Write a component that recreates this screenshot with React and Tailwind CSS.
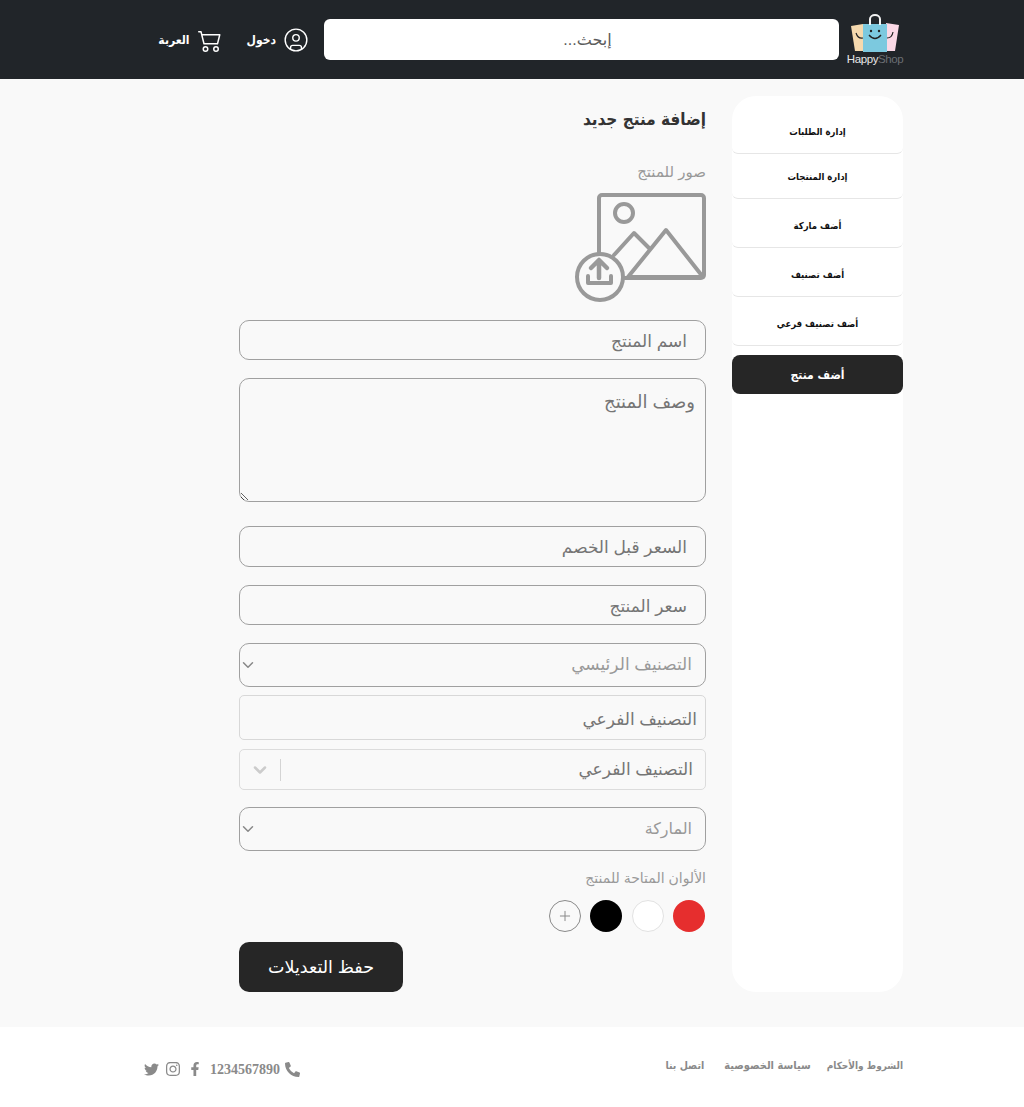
import { CircleUser, ChevronDown, Plus } from 'lucide-react';
import { BsCart2 } from 'react-icons/bs';
import { FaTwitter, FaInstagram, FaFacebookF, FaPhoneAlt } from 'react-icons/fa';

const navItems = [
  { label: 'إدارة الطلبات', cls: 'h-[44px] mb-px' },
  { label: 'إدارة المنتجات', cls: 'h-[44px] mb-[5px]' },
  { label: 'أضف ماركة', cls: 'h-[44px] mb-[5px]' },
  { label: 'أضف تصنيف', cls: 'h-[44px] mb-[5px]' },
  { label: 'أضف تصنيف فرعي', cls: 'h-[44px] mb-[9px]' },
];

const inputCls =
  'block w-full border border-[#a0a0a0] rounded-[10px] bg-transparent text-[17px] px-[18px] pt-[3px] placeholder:text-[#757575] outline-none';

const condensed = "font-['DejaVu_Sans_Condensed','Liberation_Sans',sans-serif]";

function Logo() {
  return (
    <div className="w-[56px] h-[52px] flex flex-col items-center shrink-0">
      <svg width="50" height="38" viewBox="0 0 50 38">
        <path d="M1 12 L13 10 V37 H5 Z" fill="#f5d9ae" />
        <path d="M36 9 L49 11 L45 37 H36 Z" fill="#fbd9e6" />
        <rect x="13" y="10" width="24" height="28" fill="#7cc9df" />
        <path d="M20 11 V5 a5 4 0 0 1 10 0 V11" fill="none" stroke="#f2f2f2" strokeWidth="2" />
        <circle cx="21" cy="17" r="1.2" fill="#222" />
        <circle cx="29" cy="17" r="1.2" fill="#222" />
        <path d="M19 21 q6 7 12 0" fill="none" stroke="#222" strokeWidth="1.3" />
        <path d="M6 19 q2 6 7 5" fill="none" stroke="#222" strokeWidth="1.2" />
        <path d="M37 24 q5 0 6 -6" fill="none" stroke="#222" strokeWidth="1.2" />
      </svg>
      <div dir="ltr" className="font-['Liberation_Sans',sans-serif] text-[11.5px] leading-[14px] tracking-[-0.4px] whitespace-nowrap">
        <span className="text-[#e8e8e8]">Happy</span>
        <span className="text-[#6b6f73]">Shop</span>
      </div>
    </div>
  );
}

function UploadIcon() {
  return (
    <svg width="132" height="110" viewBox="0 0 132 110" fill="none" stroke="#999999" strokeWidth="4" strokeLinejoin="round" strokeLinecap="round">
      <path d="M25 60 V6 a3 3 0 0 1 3 -3 H127 a3 3 0 0 1 3 3 V83 a3 3 0 0 1 -3 3 H49" />
      <circle cx="50" cy="21" r="9" />
      <path d="M40 63 L60 41 L75 56" />
      <path d="M54 85 L92 38 L129 85 Z" />
      <circle cx="26" cy="85" r="23" />
      <path d="M25 86 V69 M17 76 L25 68 L33 76" strokeWidth="4.5" />
      <path d="M14 84 V91 H37 V84" strokeWidth="4" />
    </svg>
  );
}

function SelectBox({ label, size }) {
  return (
    <div className="relative">
      <select className={`block w-full h-[44px] appearance-none border border-[#a0a0a0] rounded-[10px] bg-transparent text-[#999999] px-[13px] outline-none ${size}`}>
        <option>{label}</option>
      </select>
      <ChevronDown className="absolute left-0 top-[13px] w-[18px] h-[18px] text-[#888888]" strokeWidth={2} />
    </div>
  );
}

export default function App() {
  return (
    <div dir="rtl" className="min-h-[1107px] bg-[#f9f9f9] font-['Liberation_Sans','DejaVu_Sans',sans-serif]">
      {/* Header */}
      <header className="h-[79px] bg-[#212529] flex items-center pr-[121px]">
        <Logo />
        <input
          placeholder="إبحث..."
          className="w-[515px] shrink-0 h-[41px] mr-[8px] pl-[12px] bg-white rounded-[6px] text-center text-[16px] placeholder:text-[#5c5c5c] outline-none"
        />
        <div className="flex items-center mr-[15px] text-white">
          <CircleUser className="w-[26px] h-[26px]" strokeWidth={1.3} />
          <span className={`mr-[7px] text-[12px] font-bold ${condensed}`}>دخول</span>
        </div>
        <div className="flex items-center mr-[25px] text-white">
          <BsCart2 className="w-[24px] h-[24px]" />
          <span className={`mr-[8px] text-[12px] font-bold ${condensed}`}>العربة</span>
        </div>
      </header>

      {/* Main */}
      <main className="flex pt-[17px] pr-[121px] pb-[35px]">
        <aside className={`w-[171px] h-[896px] bg-white rounded-[24px] pt-[14px] ${condensed}`}>
          {navItems.map((item) => (
            <a
              key={item.label}
              className={`flex items-center justify-center pt-[2px] border-b border-[#e6e6e6] rounded-b-[6px] text-[9.5px] font-bold text-[#111111] ${item.cls}`}
            >
              {item.label}
            </a>
          ))}
          <a className="flex items-center justify-center h-[39px] bg-[#262626] rounded-[8px] text-white text-[12px] font-bold">
            أضف منتج
          </a>
        </aside>

        <section className="w-[467px] mr-[26px]">
          <h2 className={`text-[17px] leading-[24px] font-bold text-[#333333] mt-[11px] ${condensed}`}>إضافة منتج جديد</h2>
          <p className="text-[15px] leading-[20px] text-[#999999] mt-[31px]">صور للمنتج</p>
          <div className="flex mt-[10px] mb-[18px]">
            <UploadIcon />
          </div>

          <input placeholder="اسم المنتج" className={`${inputCls} h-[40px] mb-[18px]`} />
          <textarea placeholder="وصف المنتج" className="block w-full h-[124px] border border-[#a0a0a0] rounded-[10px] bg-transparent text-[18px] px-[10px] pt-[10px] mb-[24px] placeholder:text-[#757575] outline-none" />
          <input placeholder="السعر قبل الخصم" className={`${inputCls} h-[41px] mb-[18px]`} />
          <input placeholder="سعر المنتج" className={`${inputCls} h-[40px] mb-[18px]`} />

          <SelectBox label="التصنيف الرئيسي" size="text-[17px]" />

          <input
            placeholder="التصنيف الفرعي"
            className="block w-full h-[45px] mt-[8px] mb-[9px] border border-[#d8d8d8] rounded-[5px] bg-transparent text-[17px] px-[8px] pt-[4px] placeholder:text-[#757575] outline-none"
          />

          <div className="flex items-center h-[41px] border border-[#dcdcdc] rounded-[5px] mb-[17px]">
            <span className="flex-1 px-[12px] text-[17px] text-[#757575]">التصنيف الفرعي</span>
            <span className="w-px h-[22px] bg-[#d4d4d4]"></span>
            <ChevronDown className="w-[20px] h-[20px] mx-[10px] text-[#cccccc]" strokeWidth={3} />
          </div>

          <SelectBox label="الماركة" size="text-[16px]" />

          <p className="text-[14px] leading-[20px] text-[#999999] mt-[17px]">الألوان المتاحة للمنتج</p>
          <div className="flex gap-[9.5px] mr-px mt-[12px]">
            <span className="w-[32px] h-[32px] rounded-full bg-[#e62e2e]"></span>
            <span className="w-[32px] h-[32px] rounded-full bg-white border border-[#e2e2e2]"></span>
            <span className="w-[32px] h-[32px] rounded-full bg-black"></span>
            <span className="w-[32px] h-[32px] rounded-full border border-[#8a8a8a] flex items-center justify-center">
              <Plus className="w-[16px] h-[16px] text-[#8a8a8a]" strokeWidth={1.5} />
            </span>
          </div>

          <div className="flex justify-end mt-[10px]">
            <button className="w-[164px] h-[50px] bg-[#262626] text-white rounded-[10px] text-[17.5px]">
              حفظ التعديلات
            </button>
          </div>
        </section>
      </main>

      {/* Footer */}
      <footer className="h-[80px] bg-white flex justify-between pr-[121px] pl-[144px]">
        <div className={`flex items-baseline pt-[30px] leading-[16px] font-bold text-[#8a8a8a] ${condensed}`}>
          <span className="text-[10px]">الشروط والأحكام</span>
          <span className="text-[11px] mr-[16px]">سياسة الخصوصية</span>
          <span className="text-[10.5px] mr-[20px]">اتصل بنا</span>
        </div>
        <div className="flex items-center h-[16px] mt-[34px] text-[#8a8a8a]">
          <FaPhoneAlt className="w-[15px] h-[15px]" />
          <span className="mr-[5px] ml-[8px] font-['Liberation_Serif',serif] text-[14px] font-bold">1234567890</span>
          <FaFacebookF className="w-[14px] h-[14px] ml-[7px]" />
          <FaInstagram className="w-[16px] h-[16px] ml-[6px]" />
          <FaTwitter className="w-[15px] h-[15px]" />
        </div>
      </footer>
    </div>
  );
}
